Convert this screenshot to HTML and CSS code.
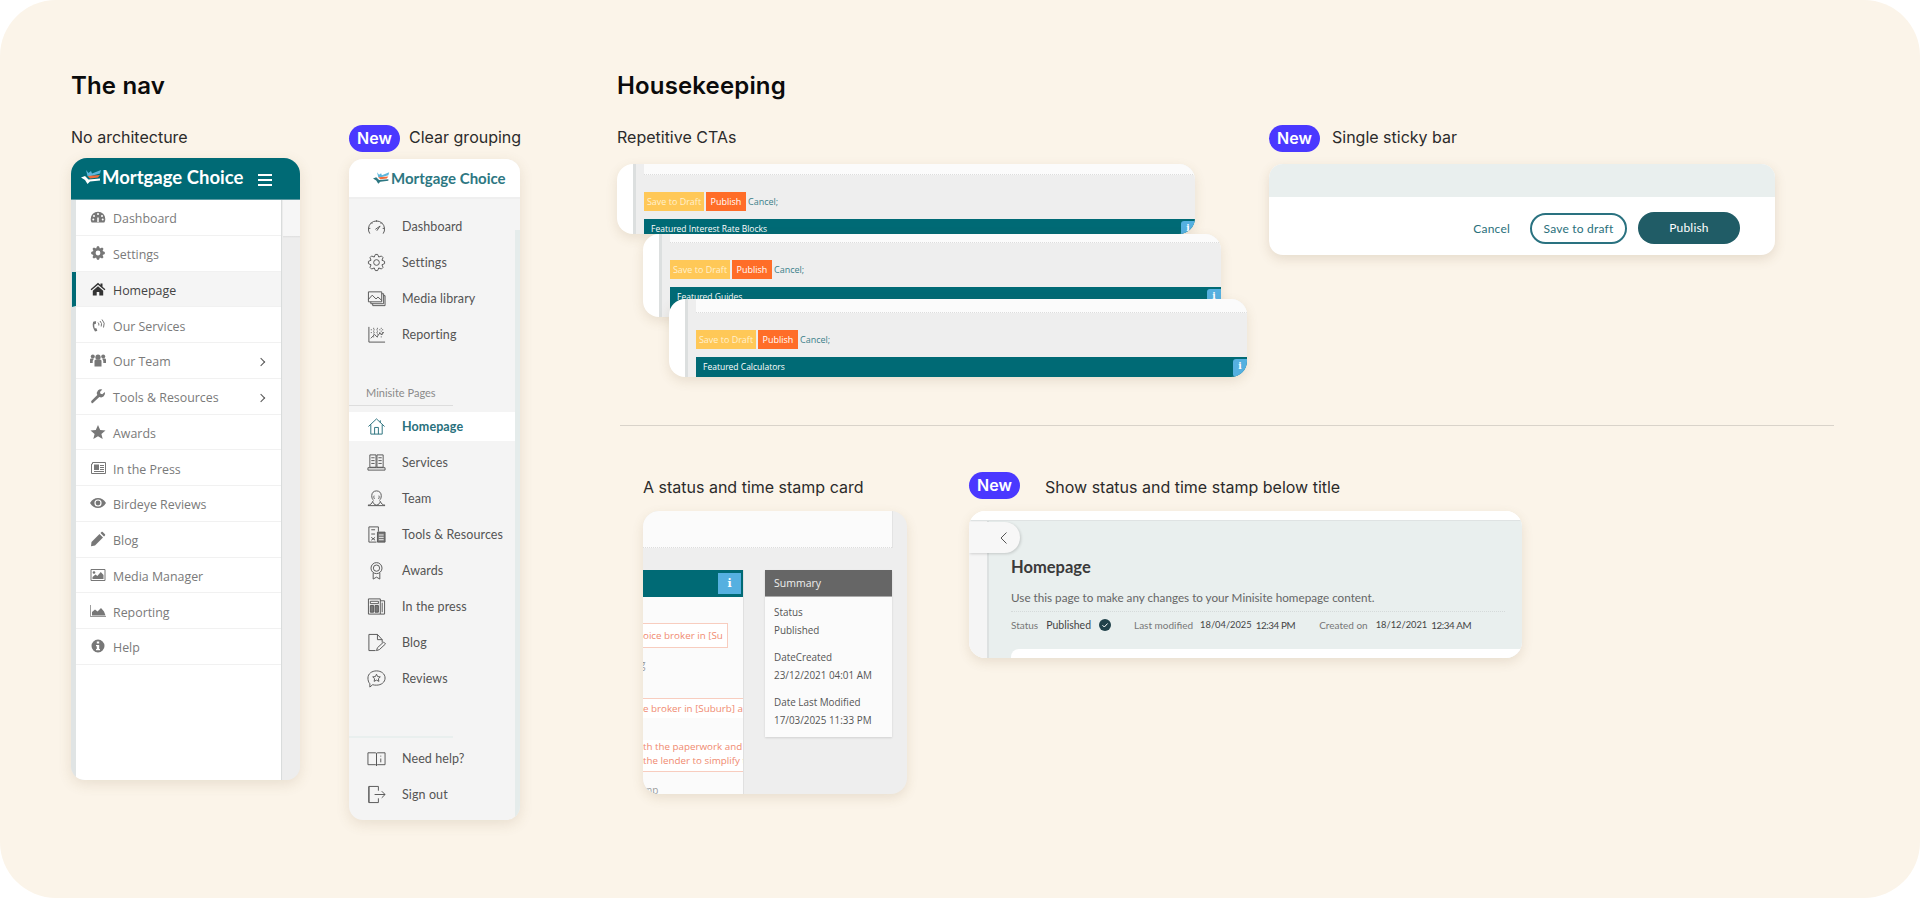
FILE: index.html
```html
<!DOCTYPE html>
<html lang="en">
<head>
<meta charset="utf-8">
<title>Minisite admin redesign</title>
<link rel="stylesheet" href="styles.css">
</head>
<body>
<div class="slide">

	<!-- left half -->
	<div class="nav_col">
		<h2>The nav</h2>
		<div class="nav_pair">
			<div class="old_wrap">
				<div class="label"><span>No architecture</span></div>
				<div class="old_nav">
					<div class="old_head">
						<svg class="logo" viewBox="0 0 21 14"><path d="M5 0l2.500 3L10 1l1 2.500L20 0l-1 3.500-9 2.500H6.500z" fill="#5cb6dc"/><path d="M6.500 6l12.500-1-2 2.500-8 1z" fill="#f26b3a"/><path d="M0 7.500L4 6l3.500 3.500L19 8.500v2L9 11.500 6.500 14 4 10z" fill="#fff"/></svg>
						<b>Mortgage Choice</b>
						<i class="burger"></i>
					</div>
					<div class="old_body">
						<ul class="old_list">
							<li><svg viewBox="0 0 16 16"><path d="M.7 10a7.300 7.300 0 1 1 14.600 0c0 1.500-.4 2.600-1 3.500H1.700C1.100 12.600.7 11.500.7 10z"/><path d="M8 13V8.500" stroke="#fff" stroke-width="1.500"/><circle cx="8" cy="5" r="1" fill="#fff"/><circle cx="4" cy="7" r="1" fill="#fff"/><circle cx="12" cy="7" r="1" fill="#fff"/><circle cx="3.300" cy="10.500" r="1" fill="#fff"/><circle cx="12.700" cy="10.500" r="1" fill="#fff"/></svg>Dashboard</li>
							<li><svg viewBox="0 0 20 20"><path fill-rule="evenodd" d="M8.800 1.500h2.400l1.170 2.770 2.790-1.130 1.700 1.700-1.130 2.790 2.770 1.170v2.400l-2.770 1.170 1.130 2.790-1.700 1.700-2.790-1.130-1.170 2.770H8.800l-1.170-2.770-2.790 1.130-1.700-1.700 1.130-2.790L1.500 11.200V8.800l2.770-1.170-1.130-2.790 1.700-1.700 2.790 1.130zM10 7a3 3 0 1 0 0 6 3 3 0 0 0 0-6z"/></svg>Settings</li>
							<li class="on"><svg viewBox="0 0 16 16"><path d="M8 1.800L.6 8.300l.9 1L8 3.800l6.500 5.500.9-1L12.500 5.800V2.500h-2v1.600zM2.800 9.800v4.700h3.900V11h2.600v3.500h3.900V9.800L8 5.300z"/></svg>Homepage</li>
							<li><svg viewBox="0 0 16 16"><path d="M5 4.200L3.200 4.800C2 8 3 11.500 5 14.500l1.900-.5c.4-.2.400-.5.300-.8l-1-2.200-1.300.4c-.7-1.500-.8-3-.4-4.300l1.300-.1.300-2.400c0-.3-.3-.5-1.100-.4z"/><path class="line" d="M8 5.500a3 3 0 0 1 .8 3M10 4a5 5 0 0 1 1.200 5.500M12 2.500a7 7 0 0 1 1.500 8"/></svg>Our Services</li>
							<li class="more"><svg viewBox="0 0 16 16"><circle cx="8" cy="5.200" r="2.600"/><circle cx="2.800" cy="4.500" r="2"/><circle cx="13.200" cy="4.500" r="2"/><path d="M4.500 9c0-1 1-1.500 2-1.500h3c1 0 2 .5 2 1.500v5.500h-7zM0 7.800c0-.8.700-1.300 1.500-1.300h2v1c-.5.500-.8 1-.8 1.700v1.800H0zM16 7.800c0-.8-.7-1.300-1.500-1.300h-2v1c.5.500.8 1 .8 1.700v1.800H16z"/></svg>Our Team</li>
							<li class="more"><svg viewBox="0 0 16 16"><path d="M1.500 14.500a1.300 1.300 0 0 1 0-1.800L7.300 7a4 4 0 0 1 5-5.500L10 4l.5 1.800 1.800.5 2.500-2.300a4 4 0 0 1-5.500 5l-5.900 5.600a1.300 1.300 0 0 1-1.900.4z"/></svg>Tools &amp; Resources</li>
							<li><svg viewBox="0 0 16 16"><path d="M8 1l2.200 5 5.300.4-4.100 3.500 1.300 5.200L8 12.300l-4.700 2.800 1.300-5.200L.5 6.400 5.800 6z"/></svg>Awards</li>
							<li><svg viewBox="0 0 16 16"><path class="line" d="M2.500 2.500h13v11h-14V4h1z"/><path d="M4 4.500h5v5.500H4zM10 5h4v1h-4zM10 7h4v1h-4zM10 9h4v1h-4zM4 11h10v1H4z"/></svg>In the Press</li>
							<li><svg viewBox="0 0 16 16"><path fill-rule="evenodd" d="M0 8c2-3.300 4.800-5 8-5s6 1.700 8 5c-2 3.300-4.800 5-8 5s-6-1.700-8-5zm8-3.600a3.600 3.600 0 1 0 0 7.200 3.600 3.600 0 0 0 0-7.200z"/><circle cx="8" cy="8" r="2.400"/></svg>Birdeye Reviews</li>
							<li><svg viewBox="0 0 16 16"><path d="M1.500 11L9.500 3l3.500 3.500-8 8-4 .8zM10.500 2l1-1c.4-.3.9-.3 1.200 0l2.300 2.300c.3.300.3.800 0 1.200l-1 1z"/></svg>Blog</li>
							<li><svg viewBox="0 0 16 16"><path class="line" d="M1 2.500h14v11H1z"/><circle cx="4" cy="5.500" r="1.300"/><path d="M2.500 12V10l3-2.500 1.800 1.500 3.500-4 2.700 3V12z"/></svg>Media Manager</li>
							<li><svg viewBox="0 0 16 16"><path d="M.3 2H1v11.300h15v.7H.3z"/><path d="M2 12.500V9l3-2.500 2.500 2L11 5l3 3.500 1.500 4z"/></svg>Reporting</li>
							<li><svg viewBox="0 0 16 16"><path fill-rule="evenodd" d="M8 1.500a6.500 6.500 0 1 1 0 13 6.500 6.500 0 0 1 0-13zM6.800 3.500v2h2.400v-2zM6 7v1.300h.8v2.700H6v1.300h4V11h-.8V7z"/></svg>Help</li>
						</ul>
						<div class="old_side"></div>
					</div>
				</div>
			</div>

			<div class="new_wrap">
				<div class="label"><em class="new">New</em><span>Clear grouping</span></div>
				<div class="new_nav">
					<div class="new_head">
						<svg class="logo_sm" viewBox="0 0 21 14"><path d="M5 0l2.500 3L10 1l1 2.500L20 0l-1 3.500-9 2.500H6.500z" fill="#5cb6dc"/><path d="M6.500 6l12.500-1-2 2.500-8 1z" fill="#f26b3a"/><path d="M0 7.500L4 6l3.500 3.500L19 8.500v2L9 11.500 6.500 14 4 10z" fill="#2d7782"/></svg>
						<b>Mortgage Choice</b>
					</div>
					<div class="new_body">
						<a class="row"><svg viewBox="0 0 20 20"><path d="M3 17.500a8.500 8.500 0 1 1 14 0M2 12h1.500M16.500 12H18M10 3.500V5M4.500 6l1 1M15.500 6l-1 1M8.800 13l5-3.500-3.500 5"/></svg>Dashboard</a>
						<a class="row"><svg viewBox="0 0 20 20"><polygon points="8.800,1.500 11.200,1.500 12.370,4.270 15.160,3.140 16.860,4.840 15.730,7.630 18.500,8.800 18.500,11.200 15.730,12.370 16.860,15.160 15.160,16.860 12.370,15.730 11.200,18.500 8.800,18.500 7.630,15.730 4.840,16.860 3.140,15.160 4.270,12.370 1.500,11.200 1.500,8.800 4.270,7.630 3.140,4.840 4.840,3.140 7.630,4.270"/><circle cx="10" cy="10" r="3"/></svg>Settings</a>
						<a class="row"><svg viewBox="0 0 20 20"><path d="M1.500 3h14v10.500h-14zM1.500 11l4-4.500 4 4 2-2 4 3.500"/><path d="M15.500 5h2v10.500H4v-2M17.500 7h1.500v10.500H6v-2"/></svg>Media library</a>
						<a class="row"><svg viewBox="0 0 20 20"><path d="M2 2v16h17"/><path d="M4 14l4-4 2.500 2.500 3-4 2 2 2-3"/><path d="M4 5h13M4 8h13M7 3v12M11 3v12M15 3v12" stroke-dasharray="1 2"/></svg>Reporting</a>
						<div class="minisite">Minisite Pages</div>
						<div class="rule"></div>
						<a class="row active"><svg viewBox="0 0 20 20"><path d="M1.500 10L10 2l8.500 8M4 8v10h12V8M8 18v-7h4v7M14 3.500V6"/></svg>Homepage</a>
						<a class="row"><svg viewBox="0 0 20 20"><path d="M3 2h6.500v13H3zM10.500 2H17v13h-6.500zM1 15.500h18v2.500H1zM4.500 5h3.500M4.500 8h3.500M4.500 11h3.500M12 5h3.500M12 8h3.500M12 11h3.500"/></svg>Services</a>
						<a class="row"><svg viewBox="0 0 20 20"><path d="M7 12c-1.500-1-2-3-2-5 0-3 2-5 5-5s5 2 5 5c0 2-.5 4-2 5M8 10.500C7 9.500 7 8 7.500 7M12 10.500c1-1 1-2.500.5-3.500M1 17c2.500 0 4-1.500 5-4 .5 2 1.500 3.500 4 4 2.500-.5 3.500-2 4-4 1 2.500 2.500 4 5 4M1 17.500h18"/></svg>Team</a>
						<a class="row"><svg viewBox="0 0 20 20"><path d="M2 2h10v5M2 2v16h8M4.500 5h4M4.500 9.500h4M4.500 13l4 3M8.500 13l-4 3"/><path class="solid" d="M11 7.500h8V18h-8z"/><path d="M12.500 10.500h5M12.500 13h5M12.500 15.500h5" stroke="#f4f4f4"/></svg>Tools &amp; Resources</a>
						<a class="row"><svg viewBox="0 0 20 20"><circle cx="10" cy="7.500" r="5.800"/><circle cx="10" cy="7.500" r="3.300"/><path d="M6.500 12.500V19l3.500-2 3.500 2v-6.500"/></svg>Awards</a>
						<a class="row"><svg viewBox="0 0 20 20"><path d="M1.500 2h12.500v16H1.500zM14 4h4.500v14H14M3.500 4.500h8.500v2.500H3.500z"/><path class="solid" d="M3.500 9h3.500v7H3.500zM8.500 9H12v7H8.500z"/><path d="M16 6v10"/></svg>In the press</a>
						<a class="row"><svg viewBox="0 0 20 20"><path d="M2 1.500h9l5 5.500v3M11 1.500V7h5M9 18.500H2v-17M10 18.500l1-3 6.500-6 2 2-6.500 6z"/></svg>Blog</a>
						<a class="row"><svg viewBox="0 0 20 20"><path d="M10 2c5 0 9 3 9 7.500S15 17 10 17c-1.500 0-3 0-4-.5L3 19v-3.500C1.500 14 1 11.500 1 9.500 1 5 5 2 10 2z"/><path d="M10 5.500l1.200 2.500 2.800.3-2 1.900.5 2.800-2.500-1.300L7.500 13l.5-2.800-2-1.900 2.800-.3z"/></svg>Reviews</a>
						<div class="foot">
							<div class="rule2"></div>
							<a class="row"><svg viewBox="0 0 20 20"><path d="M1 4h8c.6 0 1 .5 1 1v12.500c0-.6-.4-1-1-1H1zM19 4h-8c-.6 0-1 .5-1 1v12.500c0-.6.4-1 1-1h8zM14.500 7v1M14.500 10v4"/></svg>Need help?</a>
							<a class="row"><svg viewBox="0 0 20 20"><path d="M12 6V1.500H2V18.500h10V14M2 1.500l0 17M8 10h11M15.500 6.500L19 10l-3.500 3.500"/></svg>Sign out</a>
						</div>
					</div>
				</div>
			</div>
		</div>
	</div>

	<!-- right half -->
	<div class="house_col">
		<h2>Housekeeping</h2>
		<div class="top_row">
			<div class="cta_col">
				<div class="label"><span>Repetitive CTAs</span></div>
				<div class="stack">
					<div class="cta one">
						<div class="cta_main">
							<div class="cta_panel"></div>
							<div class="cta_btns"><a class="draft">Save to Draft</a><a class="pub">Publish</a><a class="cancel">Cancel;</a></div>
							<div class="cta_bar">Featured Interest Rate Blocks<i class="info">i</i></div>
						</div>
					</div>
					<div class="cta two">
						<div class="cta_main">
							<div class="cta_panel"></div>
							<div class="cta_btns"><a class="draft">Save to Draft</a><a class="pub">Publish</a><a class="cancel">Cancel;</a></div>
							<div class="cta_bar">Featured Guides<i class="info">i</i></div>
						</div>
					</div>
					<div class="cta three">
						<div class="cta_main">
							<div class="cta_panel"></div>
							<div class="cta_btns"><a class="draft">Save to Draft</a><a class="pub">Publish</a><a class="cancel">Cancel;</a></div>
							<div class="cta_bar">Featured Calculators<i class="info">i</i></div>
						</div>
					</div>
				</div>
			</div>
			<div class="sticky_col">
				<div class="label wide"><em class="new">New</em><span>Single sticky bar</span></div>
				<div class="sticky">
					<div class="sticky_top"></div>
					<div class="sticky_bar">
						<a class="s_cancel">Cancel</a>
						<a class="s_draft">Save to draft</a>
						<a class="s_pub">Publish</a>
					</div>
				</div>
			</div>
		</div>

		<div class="divider"></div>

		<div class="bottom_row">
			<div class="status_col">
				<div class="label"><span>A status and time stamp card</span></div>
				<div class="status_card">
					<div class="sc_top"></div>
					<div class="sc_cols">
						<div class="sc_left">
							<div class="sc_bar"><i class="info big">i</i></div>
							<div class="sc_field f1">oice broker in [Su</div>
							<div class="sc_hint h1">g</div>
							<div class="sc_field f2">e broker in [Suburb] ar</div>
							<div class="sc_field f3">th the paperwork and<br>the lender to simplify t</div>
							<div class="sc_hint h2">mp</div>
						</div>
						<div class="summary">
							<div class="sum_head">Summary</div>
							<div class="sum_body">
								<p>Status<br>Published</p>
								<p>DateCreated<br>23/12/2021 04:01 AM</p>
								<p>Date Last Modified<br>17/03/2025 11:33 PM</p>
							</div>
						</div>
					</div>
				</div>
			</div>
			<div class="title_col">
				<div class="label"><em class="new">New</em><span>Show status and time stamp below title</span></div>
				<div class="title_card">
					<div class="tc_white"></div>
					<div class="tc_body">
						<div class="tc_side"></div>
						<div class="tc_main">
							<h3>Homepage</h3>
							<p class="tc_desc">Use this page to make any changes to your Minisite homepage content.</p>
							<div class="tc_meta">
								<span class="m_label">Status</span><span class="m_val">Published</span>
								<svg class="tick" viewBox="0 0 12 12"><circle cx="6" cy="6" r="6" fill="#21414a"/><path d="M3.500 6.200l1.800 1.800 3.300-3.500" fill="none" stroke="#fff"/></svg>
								<span class="m_label gap1">Last modified</span><span class="m_val m_date">18/04/2025</span><span class="m_val m_time">12:34 PM</span>
								<span class="m_label gap2">Created on</span><span class="m_val m_date">18/12/2021</span><span class="m_val m_time">12:34 AM</span>
							</div>
							<div class="tc_panel"></div>
						</div>
					</div>
					<div class="tc_back"><svg viewBox="0 0 10 14"><path d="M7.500 1.500L2 7l5.500 5.500" fill="none" stroke="#555"/></svg></div>
				</div>
			</div>
		</div>
	</div>
</div>
</body>
</html>
```

FILE: styles.css
```css
*{ box-sizing:border-box; padding:0; margin:0;}
ul{ list-style:none;}
body{ background:#fff; font-family:"Inter","Liberation Sans",sans-serif; overflow:hidden;}

.slide{ width:1920px; height:898px; background:#fbf4e9; border-radius:56px; padding:71px 0 0 71px; display:flex;}
h2{ font-size:24px; line-height:30px; font-weight:600; color:#0b0b0b; letter-spacing:.15px;}

.label{ height:27px; margin-top:24px; display:flex; align-items:center; font-size:16px; line-height:24px; color:#2b2b2b; white-space:nowrap;}
.label span{ margin-top:-3px;}
.label.wide .new{ margin-right:12px;}
.new{ width:51px; height:27px; border-radius:14px; background:#4a38ff; color:#fff; font-style:normal; font-weight:600; text-align:center; line-height:27px; margin-right:9px; flex:none;}

.nav_col{ width:546px;}
.nav_pair{ display:flex; gap:49px;}
.old_wrap{ width:229px;}
.new_wrap{ width:171px;}

/* old nav */
.old_nav{ margin-top:6px; height:622px; border-radius:16px 16px 14px 14px; background:#ececec; box-shadow:0 4px 14px rgba(120,90,50,.14); overflow:hidden; display:flex; flex-direction:column; font-family:"Open Sans","Liberation Sans",sans-serif;}
.old_head{ height:42px; background:#006a75; border-bottom:1px solid #5c9aa2; display:flex; align-items:center; padding-left:10px; color:#fff; flex:none;}
.logo{ width:21px; height:14px; margin:-4px 0 0;}
.old_head b{ font-family:"Lato",sans-serif; font-size:18.500px; font-weight:700; margin:-3px 0 0; width:156px; white-space:nowrap;}
.burger{ display:block; width:14px; height:12px; margin-top:2px; border-top:2px solid #fff; border-bottom:2px solid #fff; position:relative;}
.burger:after{ content:""; position:absolute; left:0; right:0; top:3px; height:2px; background:#fff;}
.old_body{ flex:1; display:flex; border-left:5px solid #e0e4e4;}
.old_list{ width:205px; background:#fff; font-size:12.400px; color:#7a7a7a; flex:none; box-shadow:1px 0 0 #d9dcdc;}
.old_list li{ height:35.750px; border-bottom:1px solid #f1f1f1; display:flex; align-items:center; padding:3px 0 0 14px; position:relative;}
.old_list svg{ width:16px; height:16px; margin:-3px 7px 0 0; fill:#777; flex:none;}
.old_list .line{ fill:none; stroke:#777; stroke-width:1;}
.old_list .on{ background:#f5f5f5; color:#444; margin-left:-4px; padding-left:14px; border-left:4px solid #006a75;}
.old_list .on svg{ fill:#333;}
.old_list .more:after{ content:""; position:absolute; right:17px; top:16px; width:5px; height:5px; border-top:1px solid #555; border-right:1px solid #555; transform:rotate(45deg);}
.old_side{ flex:1; margin-left:2px; background:linear-gradient(#f6f6f6 36px,#dedede 36px,#ededed 38px);}

/* new nav */
.new_nav{ margin-top:7px; height:661px; border-radius:14px; background:#f4f4f4; box-shadow:0 4px 14px rgba(120,90,50,.14); overflow:hidden; display:flex; flex-direction:column; font-family:"Lato",sans-serif;}
.new_head{ height:40px; background:#fff; border-bottom:2px solid #efefef; display:flex; align-items:center; padding-left:24px; flex:none;}
.logo_sm{ width:17px; height:12px; margin-right:1px;}
.new_head b{ font-size:15px; font-weight:700; color:#2d7782; white-space:nowrap;}
.new_body{ flex:1; display:flex; flex-direction:column; padding:9px 5px 8px 0; position:relative;}
.new_body:after{ content:""; position:absolute; right:0; top:31px; bottom:0; width:5px; background:#e5eceb;}
.row{ height:36px; display:flex; align-items:center; padding-left:18px; font-size:12.500px; color:#555; letter-spacing:.1px;}
.row svg{ width:19px; height:19px; margin-right:16px; fill:none; stroke:#555; stroke-width:1; flex:none;}
.row .solid{ fill:#777;}
.row.active{ height:29px; margin:6px 0 3px; background:#fff; color:#28707c; font-weight:700;}
.row.active svg{ stroke:#28707c;}
.minisite{ margin-top:33px; height:16px; line-height:16px; padding-left:17px; font-size:11px; color:#8a8a8a;}
.rule{ width:104px; height:1px; background:#ddd; margin-top:4px;}
.foot{ margin-top:auto;}
.rule2{ width:104px; height:2px; background:#e9efee; margin-bottom:2px;}

/* housekeeping */
.house_col{ width:1218px;}
.top_row{ display:flex;}
.cta_col{ width:652px;}
.sticky_col{ width:506px;}
.stack{ margin-top:12px;}

.cta{ width:578px; position:relative; border-radius:16px; background:#fff; box-shadow:0 4px 12px rgba(120,90,50,.14); overflow:hidden; padding-left:16px; font-family:"Open Sans","Liberation Sans",sans-serif;}
.cta_main{ height:100%; background:#eee; border-left:3px solid #dcdfdf; padding-left:8px; display:flex; flex-direction:column;}
.cta_panel{ background:#fbfbfb; border-bottom:1px dotted #ddd; flex:none;}
.cta_btns{ display:flex; align-items:center; margin-top:17px; height:19px; flex:none; font-size:9px; color:#fff;}
.cta_btns a{ height:19px; line-height:19px; text-align:center; display:block;}
.draft{ width:60px; background:#ffc857; color:#fff1cf; margin-right:2px;}
.pub{ width:40px; background:#ff6d28; margin-right:2px;}
.cancel{ color:#3b7f8a;}
.cta_bar{ margin-top:8px; flex:1; background:#006a75; color:#fff; font-size:8.500px; line-height:19px; padding-left:7px; display:flex; justify-content:space-between;}
.info{ display:block; width:14px; margin-top:2px; background:#55b0e0; color:#fff; font-family:"DejaVu Serif",serif; font-size:9px; font-weight:700; font-style:normal; text-align:center; line-height:15px; border-radius:3px 0 0 3px;}
.one{ height:70px;}
.one .cta_panel{ height:11px;}
.two{ height:83px; margin-left:26px;}
.two .cta_panel{ height:9px;}
.three{ height:78px; margin:-18px 0 0 52px;}
.three .cta_panel{ height:14px;}

.sticky{ margin-top:12px; height:91px; border-radius:14px; background:#fff; box-shadow:0 4px 12px rgba(120,90,50,.16); overflow:hidden; font-family:"Lato",sans-serif;}
.sticky_top{ height:33px; background:#e9efee;}
.sticky_bar{ display:flex; align-items:center; justify-content:flex-end; padding:15px 35px 0 0; font-size:12px;}
.sticky_bar a{ display:block; text-align:center; letter-spacing:.2px;}
.s_cancel{ color:#2a6f7b; margin-right:20px;}
.s_draft{ width:97px; height:31px; line-height:27px; border:2px solid #2a7280; border-radius:16px; color:#2a6f7b; margin-right:11px;}
.s_pub{ width:102px; height:32px; line-height:32px; border-radius:16px; background:#205c66; color:#fff;}

.divider{ width:1214px; height:1px; margin:48px 0 0 3px; background:#d9d3ca;}
.bottom_row{ display:flex; margin:22px 0 0 26px;}
.status_col{ width:326px;}
.bottom_row .label span{ margin-top:2px;}

.title_col .new{ margin-right:25px;}

.status_card{ margin-top:12px; width:264px; height:283px; border-radius:16px; background:#eee; box-shadow:0 4px 12px rgba(120,90,50,.14); overflow:hidden; font-family:"Open Sans","Liberation Sans",sans-serif;}
.sc_top{ width:249px; height:37px; background:#fbfbfb; border-bottom:1px dotted #ddd; box-shadow:1px 0 0 #e3e3e3;}
.sc_cols{ display:flex; margin-top:22px;}
.sc_left{ width:100px; height:224px; background:#fbfbfb; box-shadow:1px 0 0 #e0e0e0; overflow:hidden; flex:none;}
.sc_bar{ height:27px; background:#006a75; display:flex; justify-content:flex-end; padding:3px 2px 0 0;}
.info.big{ width:23px; height:21px; margin:0; line-height:21px; font-size:11px; border-radius:0;}
.sc_field{ color:#f08a70; font-size:9.800px; white-space:nowrap; overflow:hidden; background:#fff;}
.f1{ width:85px; height:25px; line-height:23px; margin-top:26px; border:1px solid #f8cdbf; border-left:0;}
.sc_hint{ height:14px; font-size:10px; line-height:14px; color:#999; overflow:hidden;}
.h1{ margin-top:9px; text-indent:-3px;}
.h2{ margin-top:11px;}
.f2{ margin-top:27px; height:20px; line-height:20px; border-top:1px solid #f8cdbf;}
.f3{ margin-top:22px; height:32px; line-height:14px; border-bottom:1px solid #f8cdbf;}
.summary{ width:127px; margin-left:22px; background:#fbfbfb; box-shadow:0 1px 2px rgba(0,0,0,.12); height:167px;}
.sum_head{ height:27px; background:#666; color:#eee; font-size:10.500px; line-height:26px; padding-left:9px; border-bottom:1px solid #aaa;}
.sum_body{ padding:7px 9px 0; font-size:9.900px; line-height:17.500px; color:#555;}
.sum_body p{ margin-bottom:10px;}

.title_card{ margin-top:12px; width:553px; height:147px; border-radius:16px; background:#fff; box-shadow:0 4px 12px rgba(120,90,50,.14); overflow:hidden; position:relative; font-family:"Lato",sans-serif;}
.tc_white{ height:10px; background:#fff; border-bottom:1px solid #dfe3e3;}
.tc_body{ display:flex; height:137px;}
.tc_side{ width:20px; background:#f5f5f5; border-right:2px solid #dde1e1; flex:none;}
.tc_main{ flex:1; background:#e9efee; padding-left:22px; overflow:hidden;}
h3{ font-size:16.500px; line-height:20px; font-weight:700; color:#3a3a3a; margin-top:36px;}
.tc_desc{ font-size:11.700px; line-height:20px; color:#666; margin-top:10px;}
.tc_meta{ width:494px; height:26px; margin-top:4px; border-top:1px dotted #d5dada; display:flex; align-items:center; font-size:10.500px; white-space:nowrap;}
.m_label{ color:#777; margin-right:8px; font-size:10px;}
.m_val{ color:#444; margin-right:6px;}
.m_date{ font-size:9.300px; margin-right:4px;}
.m_time{ font-size:9.800px; letter-spacing:-.4px; margin-right:0;}
.tick{ width:12px; height:12px; margin-left:2px; flex:none;}
.gap1{ margin-left:23px; margin-right:7px;}
.gap2{ margin-left:24px;}
.tc_panel{ height:20px; margin-top:12px; background:#fff; border-radius:8px 0 0 0;}
.tc_back{ position:absolute; left:0; top:11px; width:51px; height:31px; background:#f7f7f7; border-radius:0 16px 16px 0; box-shadow:1px 1px 3px rgba(0,0,0,.16); display:flex; align-items:center; justify-content:flex-end; padding-right:11px;}
.tc_back svg{ width:10px; height:14px;}
```
